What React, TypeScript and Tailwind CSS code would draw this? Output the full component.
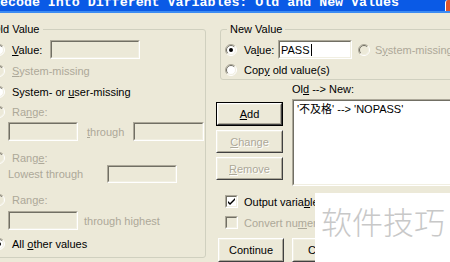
import * as React from "react"

/* Classic-XP SPSS "Old and New Values" dialog, cropped. */

function Radio({ checked, disabled }: { checked?: boolean; disabled?: boolean }) {
  return (
    <svg width="12" height="12" viewBox="0 0 12 12" className="shrink-0">
      <circle cx="6" cy="6" r="5" fill={disabled ? "#ece9d8" : "#fff"} />
      <path d="M9.9 2.1 A5.5 5.5 0 0 0 2.1 9.9" stroke="#aca899" fill="none" />
      <path d="M9.9 2.1 A5.5 5.5 0 0 1 2.1 9.9" stroke="#fff" fill="none" />
      <path d="M9.2 2.8 A4.5 4.5 0 0 0 2.8 9.2" stroke="#716f64" fill="none" />
      <path d="M9.2 2.8 A4.5 4.5 0 0 1 2.8 9.2" stroke="#f1efe2" fill="none" />
      {checked && <circle cx="6" cy="6" r="2" fill="#000" />}
    </svg>
  )
}

function Check({ checked, disabled }: { checked?: boolean; disabled?: boolean }) {
  return (
    <div className="h-[13px] w-[13px] shrink-0 border border-t-[#aca899] border-l-[#aca899] border-r-white border-b-white">
      <div
        className={`h-full w-full border border-t-[#716f64] border-l-[#716f64] border-r-[#f1efe2] border-b-[#f1efe2] ${
          disabled ? "bg-[#ece9d8]" : "bg-white"
        }`}
      >
        {checked && (
          <svg width="9" height="9" viewBox="0 0 9 9">
            <path d="M1 4 L3 6 L8 1 L8 3 L3 8 L1 6 Z" fill="#000" />
          </svg>
        )}
      </div>
    </div>
  )
}

function Field({ className = "", disabled, children }: { className?: string; disabled?: boolean; children?: React.ReactNode }) {
  return (
    <div className={`shrink-0 border border-t-[#aca899] border-l-[#aca899] border-r-white border-b-white ${className}`}>
      <div
        className={`flex h-full items-center border border-t-[#716f64] border-l-[#716f64] border-r-[#f1efe2] border-b-[#f1efe2] pl-[1px] ${
          disabled ? "bg-[#ece9d8]" : "bg-white"
        }`}
      >
        {children}
      </div>
    </div>
  )
}

function Button({
  children,
  isDefault,
  disabled,
  className = "",
}: {
  children: React.ReactNode
  isDefault?: boolean
  disabled?: boolean
  className?: string
}) {
  return (
    <div className={`shrink-0 ${isDefault ? "border border-black" : ""} ${className}`}>
      <div className="h-full border border-t-white border-l-white border-r-[#404040] border-b-[#404040]">
        <div
          className={`flex h-full items-center justify-center border border-t-[#f1efe2] border-l-[#f1efe2] border-r-[#aca899] border-b-[#aca899] ${
            disabled ? "text-[#aca899] [text-shadow:1px_1px_0_#fff]" : "text-black"
          }`}
        >
          {children}
        </div>
      </div>
    </div>
  )
}

const gray = "text-[#aca899]"

export default function App() {
  return (
    <div className="relative flex h-[262px] w-[450px] flex-col overflow-hidden bg-[#ece9d8] font-['Liberation_Sans','Noto_Sans_CJK_SC',sans-serif] text-[11px] leading-[14px] text-black">
      {/* title bar */}
      <div className="flex h-[13px] shrink-0 bg-[#0a5ae6] border-b-2 border-[#3d8cf2]">
        <div className="-ml-[8px] flex-1 overflow-hidden whitespace-nowrap font-['Liberation_Mono',monospace] text-[13.3px] font-bold leading-[13px] text-white -mt-[4px]">
          Recode Into Different Variables: Old and New Values
        </div>
        <div className="w-[5px] rounded-tl-[3px] border-l border-white bg-[#e0552d]" />
      </div>

      <div className="mt-[9px] -ml-[17px] flex">
        {/* Old Value */}
        <fieldset className="h-[236px] w-[223px] shrink-0 rounded-[3px] border border-[#d0d0bf]">
          <legend className="ml-[5px] px-[3px] leading-[14px]">Old Value</legend>
          <div className="flex flex-col pl-[9px]">
            <div className="mt-[4px] flex h-[19px] items-center">
              <Radio />
              <span className="ml-[7px] w-[38px]">
                <u>V</u>alue:
              </span>
              <Field disabled className="h-[19px] w-[90px]" />
            </div>
            <div className={`mt-[5px] flex h-[14px] items-center ${gray}`}>
              <Radio disabled />
              <span className="ml-[7px]">
                <u>S</u>ystem-missing
              </span>
            </div>
            <div className="mt-[7px] flex h-[14px] items-center">
              <Radio />
              <span className="ml-[7px]">
                System- or <u>u</u>ser-missing
              </span>
            </div>
            <div className={`mt-[6px] flex h-[14px] items-center ${gray}`}>
              <Radio disabled />
              <span className="ml-[7px]">
                Ra<u>n</u>ge:
              </span>
            </div>
            <div className={`ml-[15px] mt-[3px] flex h-[19px] items-center ${gray}`}>
              <Field disabled className="h-[19px] w-[70px]" />
              <span className="ml-[9px] w-[46px]">
                <u>t</u>hrough
              </span>
              <Field disabled className="h-[19px] w-[71px]" />
            </div>
            <div className={`mt-[10px] flex h-[14px] items-center ${gray}`}>
              <Radio disabled />
              <span className="ml-[7px]">
                Rang<u>e</u>:
              </span>
            </div>
            <div className={`ml-[15px] flex h-[18px] items-center ${gray}`}>
              <span className="w-[99px]">Lowest through</span>
              <Field disabled className="h-[18px] w-[70px]" />
            </div>
            <div className={`mt-[10px] flex h-[14px] items-center ${gray}`}>
              <Radio disabled />
              <span className="ml-[7px]">
                Ran<u>g</u>e:
              </span>
            </div>
            <div className={`ml-[15px] mt-[4px] flex h-[19px] items-center ${gray}`}>
              <Field disabled className="h-[19px] w-[70px]" />
              <span className="ml-[6px]">through highest</span>
            </div>
            <div className="mt-[7px] flex h-[14px] items-center">
              <Radio checked />
              <span className="ml-[7px]">
                All <u>o</u>ther values
              </span>
            </div>
          </div>
        </fieldset>

        {/* right column */}
        <div className="ml-[10px] flex w-[260px] shrink-0 flex-col">
          <fieldset className="ml-[4px] w-[256px] rounded-[3px] border border-[#d0d0bf] pb-[2px]">
            <legend className="ml-[6px] px-[3px] leading-[14px]">New Value</legend>
            <div className="flex flex-col pl-[4px]">
              <div className="mt-[4px] flex h-[19px] items-center">
                <Radio checked />
                <span className="ml-[7px] w-[34px]">
                  Va<u>l</u>ue:
                </span>
                <Field className="h-[19px] w-[74px]">
                  <span>PASS</span>
                  <span className="ml-[1px] h-[12px] w-px bg-black" />
                </Field>
                <span className="ml-[6px] flex items-center">
                  <Radio disabled />
                </span>
                <span className={`ml-[5px] whitespace-nowrap ${gray}`}>
                  S<u>y</u>stem-missing
                </span>
              </div>
              <div className="mt-[4px] flex h-[14px] items-center">
                <Radio />
                <span className="ml-[7px]">
                  Cop<u>y</u> old value(s)
                </span>
              </div>
            </div>
          </fieldset>

          <div className="flex">
            <div className="mt-[22px] flex w-[67px] shrink-0 flex-col">
              <Button isDefault className="h-[24px]">
                <span>
                  <u>A</u>dd
                </span>
              </Button>
              <Button disabled className="mt-[4px] h-[23px]">
                <span>
                  <u>C</u>hange
                </span>
              </Button>
              <Button disabled className="mt-[4px] h-[23px]">
                <span>
                  <u>R</u>emove
                </span>
              </Button>
            </div>
            <div className="ml-[9px] flex w-[170px] shrink-0 flex-col">
              <div className="mt-[2px] h-[14px]">
                Ol<u>d</u> --&gt; New:
              </div>
              <Field className="mt-[3px] h-[87px]">
                <div className="self-start whitespace-nowrap pl-[2px] pt-[1px]">'不及格' --&gt; 'NOPASS'</div>
              </Field>
            </div>
          </div>

          <div className="ml-[9px] mt-[9px] flex h-[13px] items-center">
            <Check checked />
            <span className="ml-[6px] whitespace-nowrap">
              Output varia<u>b</u>les are strings
            </span>
          </div>
          <div className={`ml-[9px] mt-[8px] flex h-[13px] items-center ${gray}`}>
            <Check disabled />
            <span className="ml-[6px] whitespace-nowrap">
              Convert nu<u>m</u>eric strings to numbers
            </span>
          </div>

          <div className="ml-[2px] mt-[9px] flex">
            <Button className="h-[24px] w-[66px]">Continue</Button>
            <Button className="ml-[8px] h-[24px] w-[66px]">Cancel</Button>
          </div>
        </div>
      </div>

      {/* watermark */}
      <div className="absolute left-[315px] top-[193px] flex h-[69px] w-[135px] items-start bg-white pl-[6px] pt-[10px]">
        <span className="font-['Noto_Sans_CJK_SC',sans-serif] text-[31px] font-light leading-[36px] text-[#c8c8c8]">
          软件技巧
        </span>
      </div>
    </div>
  )
}
